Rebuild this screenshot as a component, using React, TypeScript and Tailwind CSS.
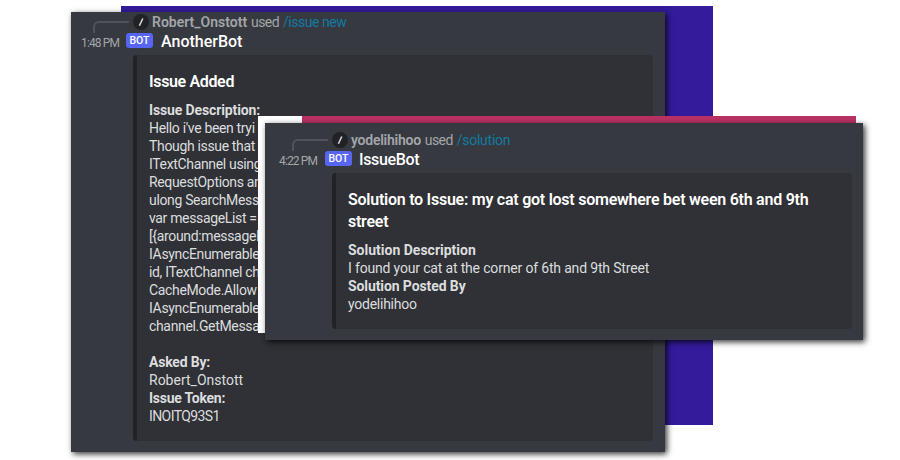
import type { ReactNode } from "react";

type MessageProps = {
  time: string;
  user: string;
  userClass: string;
  command: string;
  commandClass: string;
  bot: string;
  botClass: string;
  gutter: string;
  timeClass: string;
  className: string;
  embedClass: string;
  children: ReactNode;
};

function Message(p: MessageProps) {
  return (
    <section className={`absolute overflow-hidden bg-[#36393f] ${p.className}`}>
      <div className="flex h-5 items-center whitespace-nowrap text-[14px] leading-[20px] text-[#a3a6aa]">
        <div className={`flex shrink-0 justify-end pr-1 ${p.gutter}`}>
          <div className="mt-[10px] h-3 w-9 rounded-tl-[6px] border-l-2 border-t-2 border-[#4f545c]" />
        </div>
        <span className="mr-[3px] flex size-4 shrink-0 items-center justify-center rounded-full bg-[#202225]">
          <svg viewBox="0 0 16 16" className="size-4" stroke="#dcddde" strokeWidth="1.5">
            <path d="M9.8 4.5 6.4 11.8" />
          </svg>
        </span>
        <b className={`mr-[4px] font-semibold ${p.userClass}`}>{p.user}</b>
        <span className="mr-1 tracking-[-0.6px]">used</span>
        <span className={`text-[#127ba3] ${p.commandClass}`}>{p.command}</span>
      </div>
      <div className="flex h-5 items-center whitespace-nowrap">
        <time
          className={`shrink-0 pt-[2px] text-[12px] leading-[20px] tracking-[-0.85px] text-[#a3a6aa] ${p.timeClass}`}
        >
          {p.time}
        </time>
        <span className="mt-px flex h-[15px] w-[27px] shrink-0 items-center justify-center self-start rounded-[3px] bg-[#5865f2] text-[10.5px] font-medium leading-[15px] text-white">
          BOT
        </span>
        <span className={`text-[16px] font-medium leading-[20px] text-white ${p.botClass}`}>
          {p.bot}
        </span>
      </div>
      <div
        className={`w-[520px] whitespace-nowrap rounded-[4px] border-l-4 border-[#202225] bg-[#2f3136] pl-3 text-[14px] leading-[18px] text-[#dcddde] ${p.embedClass}`}
      >
        {p.children}
      </div>
    </section>
  );
}

const issueLines = [
  "Hello i've been tryi",
  "Though issue that",
  "ITextChannel using",
  "RequestOptions an",
  "ulong SearchMess",
  "var messageList =",
  "[{around:messageI",
  "IAsyncEnumerable",
  "id, ITextChannel ch",
  "CacheMode.Allow",
  "IAsyncEnumerable",
  "channel.GetMessa",
];

export default function App() {
  return (
    <main className="relative h-[460px] w-[900px] overflow-hidden bg-white font-[Roboto,sans-serif]">
      <div className="absolute left-[121px] top-[6px] h-[419px] w-[592px] bg-[#341b9c]" />
      <Message
        time="1:48 PM"
        timeClass="ml-[10px] w-[45px]"
        user="Robert_Onstott"
        userClass=""
        command="/issue new"
        commandClass="tracking-[-0.45px]"
        bot="AnotherBot"
        botClass="ml-2"
        gutter="w-[62px]"
        className="left-[71px] top-[12px] h-[440px] w-[594px] shadow-[2px_2px_6px_rgba(0,0,0,0.8)]"
        embedClass="ml-[62px] mt-[3px] h-[386px] pt-[16px]"
      >
        <h2 className="mb-[8px] text-[16px] font-semibold leading-[22px] tracking-[-0.35px] text-white">
          Issue Added
        </h2>
        <h3 className="font-bold tracking-[-0.13px]">Issue Description:</h3>
        {issueLines.map((text, i) => (
          <p key={i} className="tracking-[-0.34px]">{text}</p>
        ))}
        <h3 className="mt-[18px] font-bold tracking-[-0.2px]">Asked By:</h3>
        <p>Robert_Onstott</p>
        <h3 className="font-bold tracking-[-0.25px]">Issue Token:</h3>
        <p className="tracking-[-0.6px]">INOITQ93S1</p>
      </Message>
      <div className="absolute left-[258px] top-[116px] h-[217px] w-[44px] bg-white" />
      <div className="absolute left-[302px] top-[116px] h-[217px] w-[554px] bg-[#b93263]" />
      <Message
        time="4:22 PM"
        timeClass="ml-[14px] w-[46px]"
        user="yodelihihoo"
        userClass="tracking-[-0.25px]"
        command="/solution"
        commandClass="tracking-[-0.25px]"
        bot="IssueBot"
        botClass="ml-[7px] tracking-[-0.35px]"
        gutter="w-[67px]"
        className="left-[265px] top-[123px] h-[217px] w-[598px] pt-[7px] shadow-[2px_2px_6px_rgba(0,0,0,0.8)]"
        embedClass="ml-[67px] mt-[3px] h-[156px] pt-[16px]"
      >
        <h2 className="mb-[8px] text-[16px] font-semibold leading-[22px] tracking-[-0.25px] text-white">
          Solution to Issue: my cat got lost somewhere bet ween 6th and 9th
          <br />
          street
        </h2>
        <h3 className="font-bold">Solution Description</h3>
        <p className="tracking-[-0.17px]">I found your cat at the corner of 6th and 9th Street</p>
        <h3 className="font-bold tracking-[-0.1px]">Solution Posted By</h3>
        <p className="tracking-[-0.25px]">yodelihihoo</p>
      </Message>
    </main>
  );
}
